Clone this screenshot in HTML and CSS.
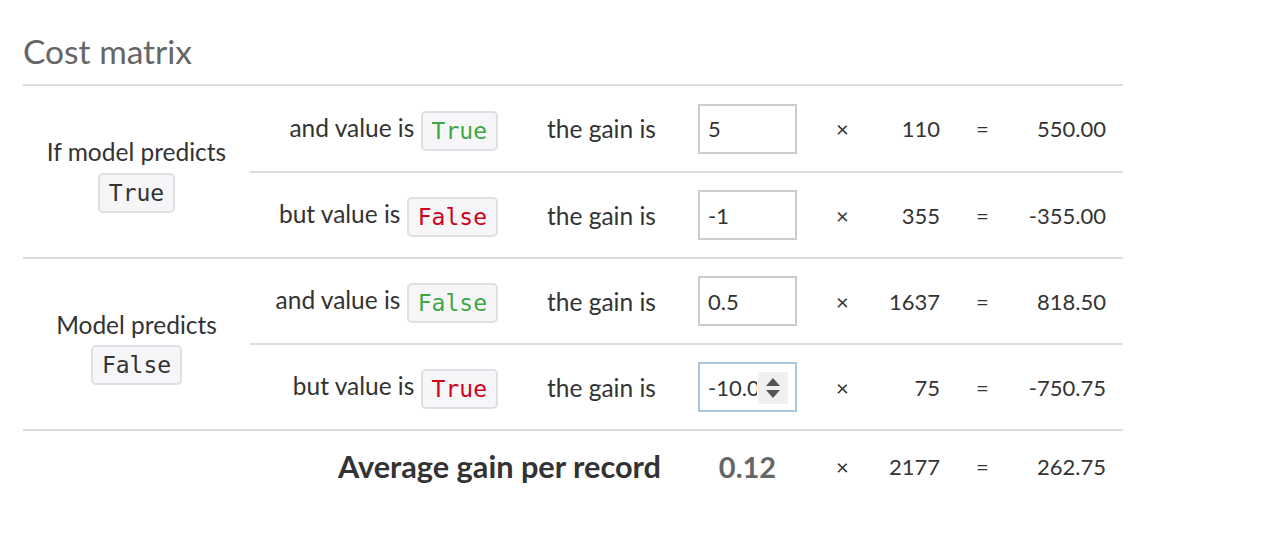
FILE: index.html
```html
<!DOCTYPE html>
<html lang="en">
<head>
<meta charset="UTF-8">
<title>Cost matrix</title>
<link rel="stylesheet" href="styles.css">
</head>
<body>
<div class="panel">
  <h2 class="panel-title">Cost matrix</h2>
  <table class="cost-matrix">
    <tr class="row">
      <td class="pred" rowspan="2">If model predicts<br><code class="tag">True</code></td>
      <td class="cond">and value is <code class="tag good">True</code></td>
      <td class="gain">the gain is</td>
      <td class="inp"><input class="num" type="text" value="5"></td>
      <td class="op">×</td>
      <td class="count">110</td>
      <td class="op">=</td>
      <td class="result">550.00</td>
    </tr>
    <tr class="row sub">
      <td class="cond">but value is <code class="tag bad">False</code></td>
      <td class="gain">the gain is</td>
      <td class="inp"><input class="num" type="text" value="-1"></td>
      <td class="op">×</td>
      <td class="count">355</td>
      <td class="op">=</td>
      <td class="result">-355.00</td>
    </tr>
    <tr class="row">
      <td class="pred" rowspan="2">Model predicts<br><code class="tag">False</code></td>
      <td class="cond">and value is <code class="tag good">False</code></td>
      <td class="gain">the gain is</td>
      <td class="inp"><input class="num" type="text" value="0.5"></td>
      <td class="op">×</td>
      <td class="count">1637</td>
      <td class="op">=</td>
      <td class="result">818.50</td>
    </tr>
    <tr class="row sub">
      <td class="cond">but value is <code class="tag bad">True</code></td>
      <td class="gain">the gain is</td>
      <td class="inp">
        <span class="spin-wrap">
          <input class="num focused" type="text" value="-10.01">
          <span class="spinner">
            <svg width="20" height="30" viewBox="0 0 20 30"><path d="M3 13 L10 5 L17 13 Z" fill="#555"/><path d="M3 17 L10 25 L17 17 Z" fill="#555"/></svg>
          </span>
        </span>
      </td>
      <td class="op">×</td>
      <td class="count">75</td>
      <td class="op">=</td>
      <td class="result">-750.75</td>
    </tr>
    <tr class="total">
      <td class="total-label" colspan="3">Average gain per record</td>
      <td class="avg">0.12</td>
      <td class="op">×</td>
      <td class="count">2177</td>
      <td class="op">=</td>
      <td class="result">262.75</td>
    </tr>
  </table>
</div>
</body>
</html>
```
FILE: styles.css
```css
* {
  box-sizing: border-box;
}

body {
  margin: 0;
  padding: 0 0 0 23px;
  background: #fff;
  color: #333;
  font-family: Lato, "Open Sans", sans-serif;
  font-size: 22px;
}

.panel {
  width: 1100px;
}

.panel-title {
  margin: 0;
  height: 86px;
  padding-top: 32px;
  font-size: 33.5px;
  font-weight: normal;
  color: #666;
  line-height: 38px;
  border-bottom: 2px solid #ddd;
}

.cost-matrix {
  width: 1100px;
  border-collapse: collapse;
  table-layout: fixed;
}

.cost-matrix td {
  padding: 0;
  height: 86px;
  vertical-align: middle;
  white-space: nowrap;
}

.row {
  border-bottom: 2px solid #ddd;
}

/* the rowspan label cell carries the full-width separator */
.pred {
  width: 227px;
  text-align: center;
  font-size: 24.5px;
  line-height: 38px;
  padding-top: 3px !important;
  border-bottom: 2px solid #ddd;
}

.cond {
  width: 260px;
  text-align: right;
  font-size: 24.5px;
  padding-top: 4px !important;
  padding-right: 12px !important;
}

.gain {
  width: 170px;
  font-size: 24.5px;
  padding-left: 37px !important;
}

.inp {
  width: 135px;
  padding: 0 18px !important;
}

.op {
  width: 55px;
  text-align: center;
}

.count {
  width: 85px;
  text-align: right;
  padding-right: 15px !important;
}

.result {
  text-align: right;
  padding-right: 17px !important;
}

.tag {
  display: inline-block;
  font-family: "DejaVu Sans Mono", monospace;
  font-size: 23px;
  line-height: 36px;
  padding: 0 9px;
  background: #f6f6f8;
  border: 2px solid #e0e0e4;
  border-radius: 5px;
  color: #333;
  vertical-align: -2px;
}

.pred .tag {
  vertical-align: middle;
}

.tag.good {
  color: #3ea846;
}

.tag.bad {
  color: #d0021b;
}

.num {
  width: 99px;
  height: 50px;
  border: 2px solid #ccc;
  padding: 0 8px;
  font-family: Lato, "Open Sans", sans-serif;
  font-size: 22px;
  color: #333;
  outline: none;
}

.num.focused {
  border-color: #a9c4dc;
  padding-right: 38px;
}

.spin-wrap {
  position: relative;
  display: inline-block;
}

.spinner {
  position: absolute;
  top: 10px;
  right: 9px;
  width: 30px;
  height: 32px;
  background: #f0f0f0;
  display: flex;
  align-items: center;
  justify-content: center;
}

.total td {
  height: 72px;
}

.total-label {
  text-align: right;
  padding-right: 19px !important;
  font-weight: bold;
  font-size: 30.7px;
}

.avg {
  text-align: center;
  font-weight: bold;
  font-size: 29px;
  color: #666;
}
```
